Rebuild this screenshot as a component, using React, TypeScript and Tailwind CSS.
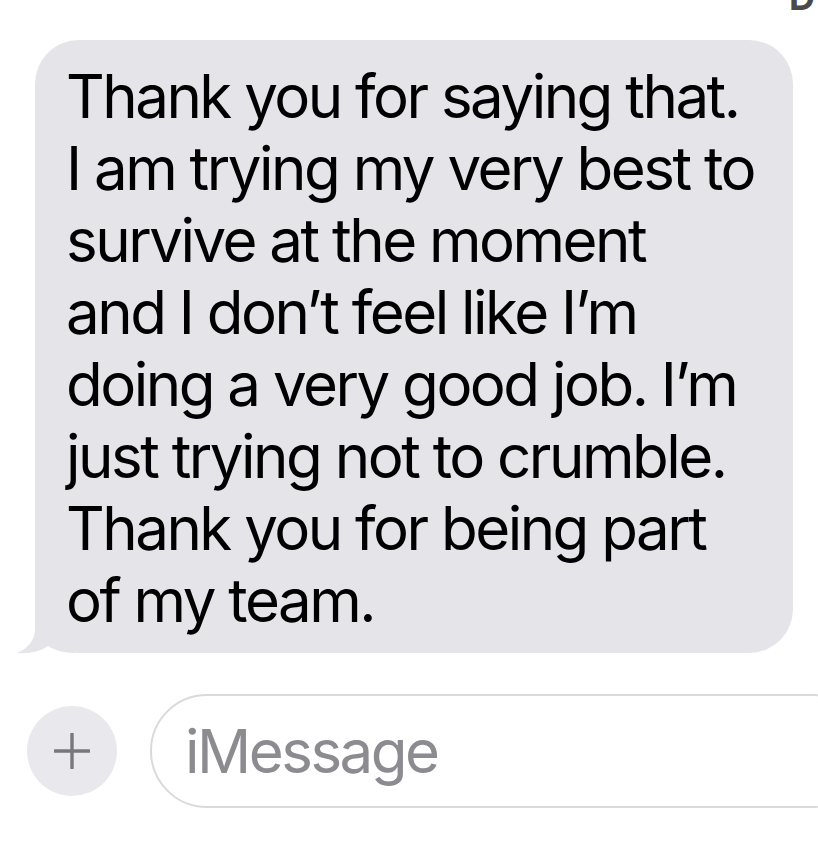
import React from 'react'

const lines = [
  'Thank you for saying that.',
  'I am trying my very best to',
  'survive at the moment',
  'and I don’t feel like I’m',
  'doing a very good job. I’m',
  'just trying not to crumble.',
  'Thank you for being part',
  'of my team.',
]

const font = { fontFamily: 'Inter, "Noto Sans", sans-serif' }

const BubbleTail = () => (
  <svg
    className="absolute left-[-20px] bottom-[-1px]"
    width="60"
    height="55"
    viewBox="0 0 60 55"
  >
    <path
      d="M20 0 L20 30 C20 42 12 50 2 54 C14 55 26 52 33 47 C40 51 48 54 60 54 L60 0 Z"
      fill="#e4e4e9"
    />
  </svg>
)

const PlusButton = () => (
  <div className="w-[90px] h-[90px] rounded-full bg-[#e9e9ed] flex items-center justify-center shrink-0">
    <svg width="36" height="36" viewBox="0 0 36 36">
      <path d="M18 1 V35 M1 18 H35" stroke="#77777c" strokeWidth="3.4" strokeLinecap="round" />
    </svg>
  </div>
)

export default function App() {
  return (
    <div className="w-[818px] h-[844px] bg-white overflow-hidden" style={font}>
      {/* cut-off header glyph */}
      <div className="h-[40px] overflow-hidden flex justify-end pr-[3px]">
        <span className="text-[36px] leading-none font-bold text-[#4a4a4e] mt-[-21px]">D</span>
      </div>

      {/* incoming bubble */}
      <div className="relative ml-[35px] w-[758px] rounded-[44px] bg-[#e4e4e9] pl-[31px] pt-[20px] pb-[17px]">
        <BubbleTail />
        <div className="relative text-[60px] leading-[72px] text-black tracking-[-2.5px]">
          {lines.map((l, i) => (
            <div key={i} className="whitespace-nowrap">
              {l}
            </div>
          ))}
        </div>
      </div>

      {/* input row */}
      <div className="flex items-center gap-[33px] pl-[27px] mt-[41px]">
        <PlusButton />
        <div className="h-[114px] w-[720px] shrink-0 rounded-[57px] border-2 border-[#dadade] flex items-center pl-[33px]">
          <span className="text-[60px] leading-none text-[#8b8b90] tracking-[-2.5px]">iMessage</span>
        </div>
      </div>
    </div>
  )
}
